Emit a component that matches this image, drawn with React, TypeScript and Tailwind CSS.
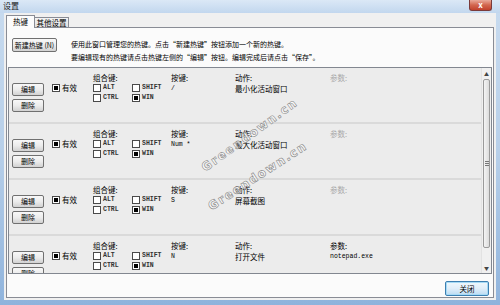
import React from 'react';

type Hotkey = {
  key: string;
  action: string;
  param: string;
  win: boolean;
};

const hotkeys: Hotkey[] = [
  { key: '/', action: '最小化活动窗口', param: '', win: true },
  { key: 'Num *', action: '最大化活动窗口', param: '', win: true },
  { key: 'S', action: '屏幕截图', param: '', win: true },
  { key: 'N', action: '打开文件', param: 'notepad.exe', win: true },
];

const Btn = ({ label, className = '' }: { label: string; className?: string }) => (
  <div
    className={`flex items-center justify-center rounded-[2px] border border-[#707070] bg-linear-to-b from-[#f8f8f8] via-[#ececec] to-[#d2d2d2] text-[7px] leading-none text-black ${className}`}
  >
    {label}
  </div>
);

const Box = ({ checked = false }: { checked?: boolean }) => (
  <span className="flex h-[8px] w-[8px] shrink-0 items-center justify-center border border-[#4a4a4a] bg-white">
    {checked && <span className="h-[4px] w-[4px] bg-black" />}
  </span>
);

const Mod = ({ label, checked = false }: { label: string; checked?: boolean }) => (
  <div className="flex h-[10px] items-center gap-[2px]">
    <Box checked={checked} />
    <span className="font-['Liberation_Mono',monospace] text-[6.5px] font-bold leading-none text-[#333]">{label}</span>
  </div>
);

const Row = ({ hk }: { hk: Hotkey }) => (
  <div className="flex h-[56px] shrink-0 border-b-2 border-[#dadada] pl-[3px]">
    <div className="flex w-[40px] shrink-0 flex-col gap-[3px] pt-[15px]">
      <Btn label="编辑" className="h-[13px] w-[32px]" />
      <Btn label="删除" className="h-[13px] w-[32px]" />
    </div>
    <div className="flex w-[41px] shrink-0 items-start gap-[2px] pt-[16px]">
      <Box checked />
      <span className="-mt-[1px] leading-[10px]">有效</span>
    </div>
    <div className="w-[78px] shrink-0 pt-[5px]">
      <div className="leading-[10px]">组合键:</div>
      <div className="grid w-[78px] grid-cols-2">
        <Mod label="ALT" />
        <Mod label="SHIFT" />
        <Mod label="CTRL" />
        <Mod label="WIN" checked={hk.win} />
      </div>
    </div>
    <div className="w-[64px] shrink-0 pt-[5px]">
      <div className="leading-[10px]">按键:</div>
      <div className="mt-[1px] font-['Liberation_Mono',monospace] text-[6.5px] leading-[10px]">{hk.key}</div>
    </div>
    <div className="w-[95px] shrink-0 pt-[5px]">
      <div className="leading-[10px]">动作:</div>
      <div className="mt-[1px] leading-[10px]">{hk.action}</div>
    </div>
    <div className="flex-1 pt-[5px]">
      <div className={`leading-[10px] ${hk.param ? 'text-black' : 'text-[#a8a8a8]'}`}>参数:</div>
      <div className="mt-[1px] font-['Liberation_Mono',monospace] text-[6.5px] leading-[10px]">{hk.param}</div>
    </div>
  </div>
);

const Scrollbar = () => (
  <div className="flex w-[10px] shrink-0 flex-col border-l border-[#e2e2e2] bg-[#f0f0f0]">
    <div className="flex h-[11px] items-center justify-center text-[5px] leading-none text-[#444]">▲</div>
    <div className="mx-[1px] flex h-[169px] flex-col items-center justify-center gap-[1px] rounded-[2px] border border-[#9a9a9a] bg-linear-to-r from-[#f4f4f4] to-[#dcdcdc]">
      <span className="h-px w-[4px] bg-[#777]" />
      <span className="h-px w-[4px] bg-[#777]" />
      <span className="h-px w-[4px] bg-[#777]" />
    </div>
    <div className="flex-1" />
    <div className="flex h-[11px] items-center justify-center text-[5px] leading-none text-[#444]">▼</div>
  </div>
);

const Watermark = ({ className }: { className: string }) => (
  <div
    className={`pointer-events-none absolute font-['DejaVu_Sans',sans-serif] text-[12px] font-bold tracking-[1.5px] text-white/70 [-webkit-text-stroke:0.6px_#8a8a8a] ${className}`}
  >
    Greendown.cn
  </div>
);

export default function App() {
  return (
    <div className="relative flex h-[305px] w-[500px] flex-col overflow-hidden bg-linear-to-b from-[#c8dbef] via-[#b7cfe9] to-[#8fb3dc] font-['Noto_Sans_CJK_SC','Liberation_Sans',sans-serif] text-[7.5px] text-black">
      {/* title bar */}
      <div className="flex h-[13px] shrink-0 items-start bg-linear-to-b from-[#dbe8f6] to-[#c2d7ee]">
        <span className="pl-[3px] pt-[1px] text-[8px] leading-[10px] text-[#1a1a1a]">设置</span>
        <div className="ml-auto mr-[8px] flex h-[11px] w-[23px] items-center justify-center rounded-b-[3px] border border-t-0 border-[#7a3a3a] bg-linear-to-b from-[#e9a99a] via-[#d2664f] to-[#c2412c] text-[8px] font-bold leading-none text-white">
          x
        </div>
      </div>

      {/* client */}
      <div className="mx-[4px] mb-[5px] flex flex-1 flex-col bg-[#f0f0f0] px-[2px] pb-[2px] pt-px">
        {/* tabs */}
        <div className="flex h-[13px] shrink-0 items-end">
          <div className="relative z-10 -mb-px flex h-[13px] w-[29px] items-center justify-center border border-b-0 border-[#898c95] bg-[#fcfcfc] pb-px">
            热键
          </div>
          <div className="flex h-[10px] w-[34px] items-center justify-center border border-l-0 border-b-0 border-[#898c95] bg-linear-to-b from-[#f3f3f3] to-[#e1e1e1]">
            其他设置
          </div>
        </div>

        {/* panel */}
        <div className="flex flex-1 flex-col border border-[#898c95] bg-[#fbfbfb] px-px">
          <div className="flex h-[39px] shrink-0 items-start pl-[4px] pt-[10px]">
            <Btn label="新建热键 (N)" className="h-[14px] w-[45px]" />
            <div className="ml-[14px] text-[7px] leading-[13px]">
              <div>使用此窗口管理您的热键。点击“新建热键”按钮添加一个新的热键。</div>
              <div>要编辑现有的热键请点击热键左侧的“编辑”按钮。编辑完成后请点击“保存”。</div>
            </div>
          </div>

          <div className="flex h-[207px] shrink-0 overflow-hidden border border-[#828790] bg-[#ececec]">
            <div className="flex flex-1 flex-col overflow-hidden">
              {hotkeys.map((hk, i) => (
                <Row key={i} hk={hk} />
              ))}
            </div>
            <Scrollbar />
          </div>

          <div className="flex flex-1 items-start justify-end pr-[3px] pt-[7px]">
            <div className="flex h-[15px] w-[44px] items-center justify-center rounded-[2px] border border-[#3c7fb1] bg-linear-to-b from-[#f0f8fd] via-[#e0eef9] to-[#bcdcf3] text-[7.5px] leading-none shadow-[inset_0_0_0_1px_#a6daf5]">
              关闭
            </div>
          </div>
        </div>
      </div>

      <Watermark className="left-[192px] top-[126px] -rotate-[36deg]" />
      <Watermark className="left-[200px] top-[167px] -rotate-[33deg]" />
    </div>
  );
}
